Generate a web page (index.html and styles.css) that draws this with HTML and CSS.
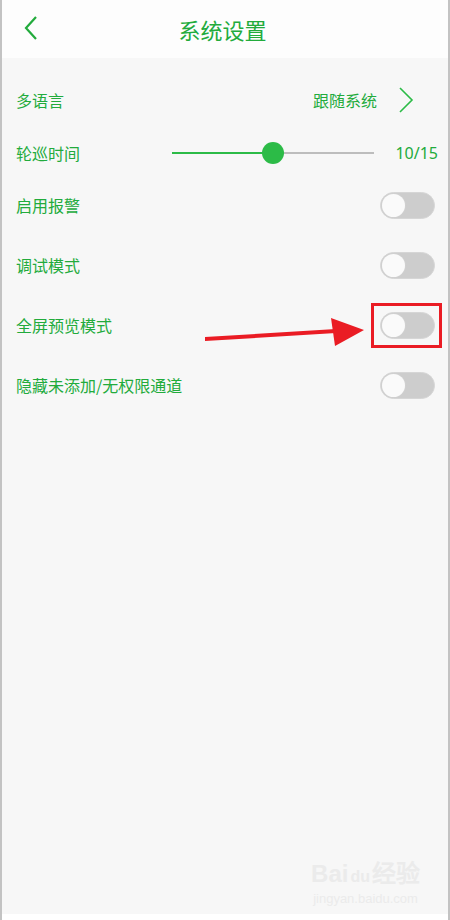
FILE: index.html
```html
<!DOCTYPE html>
<html lang="zh-CN">

<head>
  <meta charset="UTF-8" />
  <meta name="viewport" content="width=device-width, initial-scale=1.0" />
  <title>系统设置</title>
  <link rel="stylesheet" href="styles.css">
</head>

<body>

  <div class="screen">
    <div class="header">
      <svg class="back" width="16" height="26" viewBox="0 0 16 26">
        <path d="M13 2 L3 13 L13 24" fill="none" stroke="#22ab3c" stroke-width="2.2" />
      </svg>
      <div class="title">系统设置</div>
    </div>

    <div class="content">
      <div class="row lang">
        <div class="label">多语言</div>
        <div class="value">跟随系统</div>
        <svg class="arrow-right" width="16" height="26" viewBox="0 0 16 26">
          <path d="M2 1 L14 13 L2 25" fill="none" stroke="#2cbb47" stroke-width="1.6" />
        </svg>
      </div>

      <div class="row slider-row">
        <div class="label">轮巡时间</div>
        <div class="slider">
          <div class="fill" style="width: 50%"></div>
          <div class="thumb" style="left: 50%"></div>
        </div>
        <div class="count">10/15</div>
      </div>

      <div class="row">
        <div class="label">启用报警</div>
        <div class="switch"><span></span></div>
      </div>

      <div class="row">
        <div class="label">调试模式</div>
        <div class="switch"><span></span></div>
      </div>

      <div class="row">
        <div class="label">全屏预览模式</div>
        <div class="switch"><span></span></div>
      </div>

      <div class="row">
        <div class="label">隐藏未添加/无权限通道</div>
        <div class="switch"><span></span></div>
      </div>
    </div>

    <!-- 标注：红色箭头和方框 -->
    <svg class="mark" width="450" height="920" viewBox="0 0 450 920">
      <path d="M205 337 L336 329 L336 333 L205 341 Z" fill="#ea1c24" />
      <path d="M331 318 L364 330 L335 346 Z" fill="#ea1c24" />
      <rect x="372.5" y="304.5" width="68" height="42" fill="none" stroke="#ea1c24" stroke-width="3" />
    </svg>

    <div class="watermark">
      <div class="wm-logo">Bai<span class="paw">du</span>经验</div>
      <div class="wm-url">jingyan.baidu.com</div>
    </div>
  </div>

</body>

</html>
```

FILE: styles.css
```css
/* Dasar */
* {
  margin: 0;
  padding: 0;
  box-sizing: border-box;
}

body {
  font-family: 'Noto Sans CJK SC', 'Noto Sans', sans-serif;
  background: #fff;
  width: 450px;
  height: 920px;
  overflow: hidden;
}

.screen {
  position: relative;
  width: 450px;
  height: 920px;
  border-left: 2px solid #c3c3c3;
  border-right: 2px solid #c3c3c3;
  display: flex;
  flex-direction: column;
}

/* Header */
.header {
  height: 58px;
  background: #fdfdfd;
  display: flex;
  align-items: center;
  justify-content: center;
  position: relative;
  flex-shrink: 0;
}

.header .back {
  position: absolute;
  left: 21px;
  top: 15px;
}

.header .title {
  font-size: 22px;
  color: #22ab3c;
  margin-right: 5px;
}

/* Konten */
.content {
  height: 856px;
  background: #f7f7f7;
  padding-top: 11px;
}

.row {
  height: 60px;
  display: flex;
  align-items: center;
  padding: 0 11px 0 14px;
  color: #22ab3c;
  font-size: 16px;
}

.row.lang {
  height: 62px;
  padding-right: 34px;
}

.row.slider-row {
  height: 44px;
}

.row .label {
  flex: 1;
}

.row .value {
  margin-right: 21px;
}

.slider {
  position: relative;
  width: 202px;
  height: 2px;
  background: #bdbdbd;
  margin-right: 21px;
}

.slider .fill {
  height: 2px;
  background: #2cbb47;
}

.slider .thumb {
  position: absolute;
  top: -10px;
  width: 22px;
  height: 22px;
  margin-left: -11px;
  border-radius: 50%;
  background: #2cbb47;
}

.count {
  font-family: 'Noto Sans', sans-serif;
  font-size: 16px;
  margin-right: -1px;
}

/* Toggle */
.switch {
  width: 55px;
  height: 27px;
  border-radius: 14px;
  background: #cdcdcd;
  border: 1px solid #d6d6d6;
  position: relative;
  margin-right: 2px;
}

.switch span {
  position: absolute;
  left: 1px;
  top: 1px;
  width: 23px;
  height: 23px;
  border-radius: 50%;
  background: #fafafa;
  box-shadow: 0 0 0 1px #d0d0d0;
}

/* Anotasi */
.mark {
  position: absolute;
  left: -2px;
  top: 0;
  pointer-events: none;
}

.watermark {
  position: absolute;
  right: 28px;
  bottom: 14px;
  text-align: center;
  color: #ebebeb;
}

.wm-logo {
  font-family: 'Liberation Sans', sans-serif;
  font-weight: bold;
  font-size: 24px;
  line-height: 28px;
}

.wm-logo .paw {
  font-size: 16px;
  margin: 0 2px;
}

.wm-url {
  font-family: 'Liberation Sans', sans-serif;
  font-size: 13px;
}
```
